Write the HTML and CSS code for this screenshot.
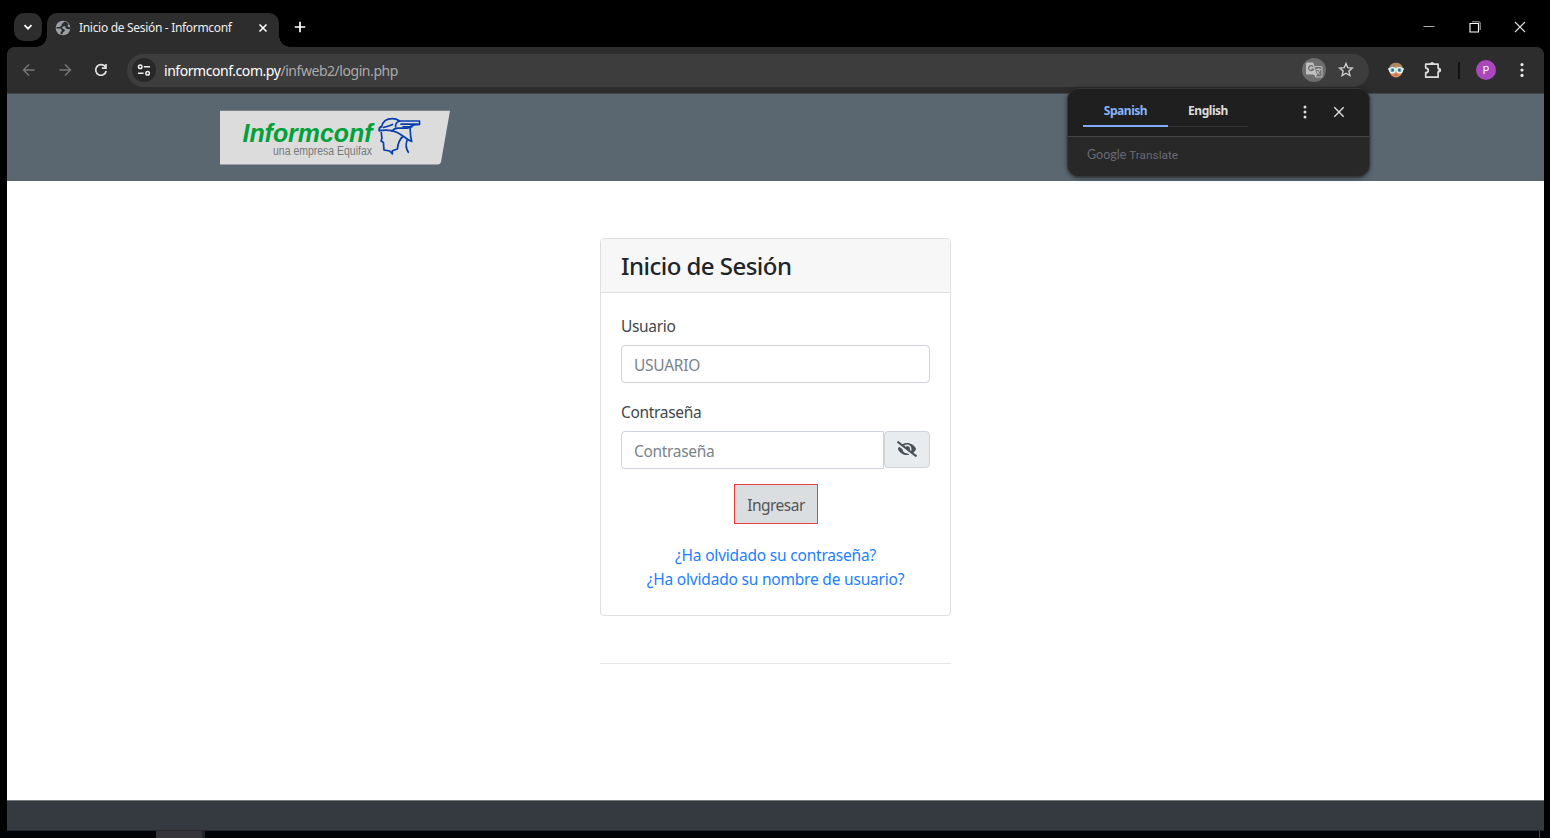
FILE: index.html
```html
<!DOCTYPE html>
<html lang="es">
<head>
<meta charset="utf-8">
<title>Inicio de Sesión - Informconf</title>
<link rel="stylesheet" href="styles.css">
</head>
<body>
<div class="desktop">
  <div class="tabstrip">
    <div class="tab-search"><svg width="12" height="12" viewBox="0 0 12 12"><path d="M2.5 4.2 6 7.7l3.5-3.5" fill="none" stroke="#fff" stroke-width="1.7"/></svg></div>
    <div class="tab">
      <svg class="favicon" width="16" height="16" viewBox="0 0 16 16"><circle cx="8" cy="8" r="7.3" fill="#9aa0a6"/><path d="M9.3 1.5 8 3.2 6.6 4v1.8L4.3 7H1.5v1.4h3.8l1.4 1.3-.1 1.6-1 1v1.6l1.5.5 1-2.2 1.8-1.2-.4-1.6-1.8-.8-.8-1.4 2-1h1.8l-.4 1.5 1.6 1.4 2.8.2.8-1.8-2.2-.4-.8-1.4 1-1.3-1.3-2z" fill="#2d2d2d"/></svg>
      <span class="tab-title">Inicio de Sesión - Informconf</span>
      <svg class="tab-close" width="10" height="10" viewBox="0 0 10 10"><path d="m1.5 1.5 7 7m0-7-7 7" stroke="#fff" stroke-width="1.6"/></svg>
    </div>
    <svg class="new-tab" width="12" height="12" viewBox="0 0 12 12"><path d="M6 .8v10.4M.8 6h10.4" stroke="#fff" stroke-width="1.7"/></svg>
    <div class="window-controls">
      <svg width="12" height="12" viewBox="0 0 12 12"><path d="M.5 5.5h11" stroke="#aaa"/></svg>
      <svg width="12" height="12" viewBox="0 0 12 12"><path d="M1 2.5h8.5V11H1z" fill="none" stroke="#fff" stroke-width="1.1"/><path d="M3 .8h7.2a1 1 0 0 1 1 1V9" fill="none" stroke="#aaa"/></svg>
      <svg width="12" height="12" viewBox="0 0 12 12"><path d="m1 1 10 10m0-10L1 11" stroke="#ddd" stroke-width="1.1"/></svg>
    </div>
  </div>

  <div class="window">
    <div class="toolbar">
      <div class="nav">
        <svg width="14" height="14" viewBox="0 0 14 14"><path d="M12.5 7h-11M7 1.5 1.5 7 7 12.5" fill="none" stroke="#777" stroke-width="1.4"/></svg>
        <svg width="14" height="14" viewBox="0 0 14 14"><path d="M1.5 7h11M7 1.5 12.5 7 7 12.5" fill="none" stroke="#777" stroke-width="1.4"/></svg>
        <svg width="14" height="14" viewBox="0 0 14 14"><path d="M11.5 4.1A5.3 5.3 0 1 0 12.2 8" fill="none" stroke="#e3e3e3" stroke-width="1.7"/><path d="M12.8 1v5H7.9V4.3h3.2V1z" fill="#e3e3e3"/></svg>
      </div>
      <div class="address">
        <div class="site-info"><svg width="14" height="12" viewBox="0 0 14 12"><g fill="none" stroke="#eee" stroke-width="1.5"><circle cx="3.2" cy="2.8" r="1.8"/><path d="M6.8 2.8H13M1 9.2h5.6"/><circle cx="10.6" cy="9.2" r="1.8"/></g></svg></div>
        <span class="url">informconf.com.py<span class="url-path">/infweb2/login.php</span></span>
        <div class="translate"><svg width="18" height="18" viewBox="0 0 18 18"><path d="M8 5.5h8a1 1 0 0 1 1 1V15a1 1 0 0 1-1 1h-5.2z" fill="#707070" stroke="#bbb" stroke-width="1.1"/><path d="M2 1.5h6.3l3.4 12H2a1 1 0 0 1-1-1v-10a1 1 0 0 1 1-1z" fill="#c0c0c0"/><path d="M8.2 5.8A2.5 2.5 0 1 0 8.5 8H6.2" fill="none" stroke="#686868" stroke-width="1.2"/><path d="M10.8 8.4H16M13.3 7.2v1.2m1.7 0c-.4 1.8-1.5 3.1-3.4 4.3m.2-2.8c.8 1.5 1.7 2.4 3 3.1M8.7 13.5h3l-1.5 2" fill="none" stroke="#c8c8c8"/></svg></div>
        <svg class="star" width="16" height="16" viewBox="0 0 16 16"><path d="m8 1.5 1.75 4.2 4.55.4-3.45 3 1.05 4.45L8 11.2l-3.9 2.35L5.15 9.1 1.7 6.1l4.55-.4z" fill="none" stroke="#ccc" stroke-width="1.4"/></svg>
      </div>
      <svg class="face" width="16" height="16" viewBox="0 0 16 16"><path d="M1.2 8h13.6c0 4-3 7.4-6.8 7.4S1.200 12 1.200 8z" fill="#e38d67"/><path d="M.8 8C.8 3.500 4 .8 8 .8s7.200 2.700 7.200 7.200z" fill="#aa8960"/><path d="M4 6.500c2-1 4-2 5-3l3.500 3.500L8 9z" fill="#d99468"/><path d="M.2 6.300h15.600v2H.2z" fill="#dff3f4"/><circle cx="4.400" cy="8.200" r="2.700" fill="#6cabb9" stroke="#e9ffff" stroke-width="1.200"/><circle cx="11.600" cy="8.200" r="2.700" fill="#6cabb9" stroke="#e9ffff" stroke-width="1.200"/><circle cx="4.700" cy="8.100" r="1.100" fill="#345d6d"/><circle cx="11.300" cy="8.100" r="1.100" fill="#345d6d"/><path d="M6.500 13h3" stroke="#a95248"/></svg>
      <svg class="puzzle" width="18" height="18" viewBox="0 0 18 18"><path d="M1.700 3.200h12.400v4.100q2.200 0 2.200 1.800t-2.200 1.800v5.300H1.700v-4.500q2.600-.1 2.600-2.300T1.700 7.100z" fill="none" stroke="#ddd" stroke-width="1.700" stroke-linejoin="round"/><path d="M6 3a2.100 2.100 0 0 1 4.200 0zM14.300 7a2.100 2.100 0 0 1 0 4.200z" fill="#ddd"/></svg>
      <span class="divider"></span>
      <span class="avatar">P</span>
      <svg class="menu" width="4" height="16" viewBox="0 0 4 16" fill="#e8e8e8"><circle cx="2" cy="2.6" r="1.6"/><circle cx="2" cy="8" r="1.6"/><circle cx="2" cy="13.4" r="1.6"/></svg>
    </div>

    <header class="site-header">
      <svg class="logo" width="230" height="55" viewBox="0 0 230 55">
        <path d="M0 .7h230l-9 51.3q-.4 2.4-3 2.4H0z" fill="#dcdcdc"/>
        <text class="logo-name" x="22.500" y="31.500" textLength="130" lengthAdjust="spacingAndGlyphs">Informconf</text>
        <text class="logo-sub" x="53" y="45" textLength="99" lengthAdjust="spacingAndGlyphs">una empresa Equifax</text>
        <g fill="none" stroke="#073fae" stroke-width="1.7" stroke-linejoin="round" stroke-linecap="round">
          <path d="M159.200 20.500c-.3-2.300.8-3.400 2.500-3.800 1-5.200 4.600-8 10.600-8 3.500 0 5.700 1.200 7.500 2.300h19.700v3.500l-5.500.5-4 1.600-2.500 1.600h-9.500c-3.500 0-4.500 1-6 3"/>
          <path d="M159.200 20.700c7.500-1.200 12.500-.8 18 1.700 6 2.800 8.500 7 14.500 9l-1-4.600-.7-9.500M179.800 11c-3.500 1-4.500 3-4.200 6M181 14.200h17M183 16.800h9M163.500 17.500c3-.8 6-1.300 9-3"/>
          <path d="M161.300 22.500l.6 5.700-.8 2.800 2.300 1.500.6 7.500 5.700 1 2.700 2.800v-3.100l5-1.700c.5-5.500 2-9.500 5.300-12.500M187 30.500c-1.500 4-1 8 1.300 11.800"/>
        </g>
      </svg>
    </header>

    <main class="content">
      <section class="card">
        <div class="card-header"><h1>Inicio de Sesión</h1></div>
        <form class="card-body">
          <label class="label-user" for="user">Usuario</label>
          <input class="field field-user" id="user" placeholder="USUARIO">
          <label class="label-pass" for="pass">Contraseña</label>
          <div class="password-group">
            <input class="field field-pass" id="pass" type="password" placeholder="Contraseña">
            <span class="toggle"><svg width="20" height="16" viewBox="0 0 640 512" fill="#495057"><path d="M320 400c-75.85 0-137.25-58.71-142.9-133.11L72.2 185.82c-13.79 17.3-26.48 35.59-36.72 55.59a32.35 32.35 0 0 0 0 29.19C89.71 376.41 197.07 448 320 448c26.91 0 52.87-4 77.89-10.46L346 397.39a144.13 144.13 0 0 1-26 2.61zm313.82 58.1l-110.55-85.44a331.25 331.25 0 0 0 81.25-102.07 32.35 32.35 0 0 0 0-29.19C550.29 135.59 442.93 64 320 64a308.15 308.15 0 0 0-147.32 37.7L45.46 3.37A16 16 0 0 0 23 6.18L3.37 31.45A16 16 0 0 0 6.18 53.9l588.36 454.73a16 16 0 0 0 22.46-2.81l19.64-25.27a16 16 0 0 0-2.82-22.45zm-183.72-142l-39.3-30.38A94.75 94.75 0 0 0 416 256a94.76 94.76 0 0 0-121.31-92.21A47.65 47.65 0 0 1 304 192a46.64 46.64 0 0 1-1.54 10l-73.61-56.89A142.31 142.31 0 0 1 320 112a143.92 143.92 0 0 1 144 144c0 21.63-5.29 41.79-13.9 60.11z"/></svg></span>
          </div>
          <button class="submit" type="button">Ingresar</button>
          <nav class="links"><a href="#">¿Ha olvidado su contraseña?</a><a href="#">¿Ha olvidado su nombre de usuario?</a></nav>
        </form>
      </section>
      <hr class="rule">
    </main>
    <footer class="site-footer"></footer>
  </div>
  <div class="taskbar"><span class="task"></span><span class="show-desktop"></span></div>

  <aside class="popup">
    <div class="popup-top">
      <div class="languages"><span class="language active">Spanish</span><span class="language">English</span></div>
      <svg class="popup-menu" width="4" height="14" viewBox="0 0 4 14" fill="#ddd"><circle cx="2" cy="2" r="1.5"/><circle cx="2" cy="7" r="1.5"/><circle cx="2" cy="12" r="1.5"/></svg>
      <svg class="popup-close" width="12" height="12" viewBox="0 0 12 12"><path d="m1.3 1.3 9.400 9.400m0-9.400-9.400 9.400" stroke="#ddd" stroke-width="1.400"/></svg>
    </div>
    <div class="popup-bottom"><span class="google">Google</span><span>Translate</span></div>
  </aside>
</div>
</body>
</html>
```
FILE: styles.css
```css
* { box-sizing: border-box; }
body { margin: 0; background: #000; font-family: "Noto Sans", "Open Sans", sans-serif; }
svg { display: block; flex: none; }
.desktop { position: relative; display: flex; flex-direction: column; width: 1550px; height: 838px; overflow: hidden; }
.tabstrip { display: flex; height: 47px; padding: 13px 24px 0 14px; }
.tab-search { display: grid; place-items: center; width: 28px; height: 28px; border-radius: 10px; background: #2d2d2d; }
.tab { position: relative; display: flex; align-items: center; width: 232px; height: 34px; margin-left: 5px; padding: 0 11px 5px 8px; border-radius: 10px 10px 0 0; background: #2d2d2d; }
.tab::before, .tab::after { content: ""; position: absolute; bottom: 0; width: 11px; height: 11px; }
.tab::before { left: -11px; background: radial-gradient(circle at 0 0, transparent 10.5px, #2d2d2d 11px); }
.tab::after { right: -11px; background: radial-gradient(circle at 100% 0, transparent 10.5px, #2d2d2d 11px); }
.tab-title { margin-left: 8px; color: #eee; font-size: 12px; letter-spacing: -.31px; white-space: nowrap; }
.tab-close { margin-left: auto; }
.new-tab { margin: 8px 0 0 15px; }
.window-controls { display: flex; gap: 33.5px; margin: 8px 0 0 auto; }
.window { width: 1537px; height: 784px; margin-left: 7px; display: flex; flex-direction: column; border-radius: 8px 8px 0 0; overflow: hidden; background: linear-gradient(#2d2d2d 47px, #fff 47px); }
.toolbar { display: flex; align-items: center; flex: none; height: 47px; padding-left: 15px; border-bottom: 1px solid #424649; background: #2d2d2d; }
.nav { display: flex; gap: 22px; }
.address { display: flex; align-items: center; width: 1242px; height: 33px; margin-left: 19px; padding: 0 15px 0 5px; border-radius: 17px; background: #3d3d3d; }
.site-info { display: grid; place-items: center; width: 24px; height: 24px; border-radius: 50%; background: #282828; }
.url { margin-left: 8px; color: #fff; font-size: 14px; letter-spacing: -.45px; }
.url-path { color: #aaa; }
.translate { display: grid; place-items: center; width: 24px; height: 24px; margin-left: auto; margin-right: 12px; border-radius: 50%; background: #6d6d6d; }
.face { margin-left: 19px; }
.puzzle { margin-left: 20px; }
.divider { width: 2px; height: 17px; margin-left: 16px; background: #111; }
.avatar { display: grid; place-items: center; width: 20px; height: 20px; margin-left: 16px; border-radius: 50%; background: #ab47bc; color: #fff; font: 10px Roboto, sans-serif; }
.menu { margin-left: 24px; }
.site-header { flex: none; height: 87px; padding: 16px 0 0 213px; background: #5b6770; }
.logo-name { fill: #00a13a; font: italic bold 25.5px "Liberation Sans", sans-serif; }
.logo-sub { fill: #77797c; font: 12px "Liberation Sans", sans-serif; }
.content { flex: none; display: flex; flex-direction: column; align-items: center; height: 619px; padding-top: 57px; }
.card { width: 351px; height: 378px; border: 1px solid #dfdfdf; border-radius: 4px; overflow: hidden; }
.card-header { height: 54px; padding: 12px 20px; border-bottom: 1px solid #dfdfdf; background: #f7f7f7; }
h1 { margin: 0; color: #212529; font-size: 24px; line-height: 30px; font-weight: 500; letter-spacing: -.53px; white-space: nowrap; }
.card-body { display: flex; flex-direction: column; padding: 21px 20px 20px; color: #42474b; font-size: 15.5px; line-height: 24px; }
label { height: 24px; margin-bottom: 7px; align-self: flex-start; }
.field { width: 100%; height: 38px; padding: 2px 12px 0; border: 1px solid #ced4da; border-radius: 4px; outline: none; background: #fff; font: 15.5px "Noto Sans", "Open Sans", sans-serif; }
.field::placeholder { color: #7b838a; opacity: 1; }
.field-user { margin-bottom: 17px; letter-spacing: -.28px; }
.label-user, .label-pass { letter-spacing: -.33px; }
.password-group { display: flex; align-items: flex-start; }
.field-pass { flex: 1; min-width: 0; border-radius: 4px 0 0 4px; letter-spacing: -.33px; }
.toggle { display: grid; place-items: center; width: 46px; height: 37px; border: 1px solid #ced4da; border-radius: 4px; background: #e9ecef; }
.toggle svg { margin-bottom: 1px; }
.submit { width: 84px; height: 40px; margin: 15px 0 0 113px; padding: 2px 0 0; border: 1px solid #ef3e42; background: #dbdee1; color: #555; font: 15.5px "Noto Sans", "Open Sans", sans-serif; letter-spacing: -.5px; }
.links { display: flex; flex-direction: column; align-items: center; margin-top: 19px; white-space: nowrap; }
.links a { color: #217fff; text-decoration: none; letter-spacing: -.2px; }
.rule { width: 351px; height: 1px; margin: 47px 0 0; border: 0; background: #e8e8e8; }
.site-footer { flex: 1; border-top: 1px solid #747b7a; border-bottom: 1px solid #25292e; background: #343a40; }
.taskbar { display: flex; justify-content: space-between; height: 7px; padding: 0 10px 0 156px; background: #000307; }
.task { width: 49px; border-right: 3px solid #242529; background: #35353a; }
.show-desktop { width: 1px; background: #444; }
.popup { position: absolute; left: 1067px; top: 88px; width: 303px; height: 89px; overflow: hidden; border: 1px solid #363636; border-radius: 12px; background: #282828; box-shadow: 0 1px 4px #0008; }
.popup-top { display: flex; height: 48px; padding-left: 15px; border-bottom: 1px solid #444746; background: #1f1f1f; }
.languages { display: flex; align-self: flex-start; }
.language { width: 80px; height: 38px; padding-top: 13px; border-bottom: 1px solid #353535; color: #ddd; font-size: 12px; line-height: 18px; font-weight: 700; text-align: center; letter-spacing: -.45px; }
.language.active { width: 85px; border-bottom: 2px solid #7cacf8; color: #8ab4f8; }
.popup-menu { margin: 16px 0 0 55px; }
.popup-close { margin: 17px 0 0 26px; }
.popup-bottom { display: flex; align-items: center; gap: 3px; height: 35px; padding-left: 19px; color: #686b70; font: 11.8px Roboto, sans-serif; }
.google { font-family: Lato, sans-serif; font-size: 12.5px; }
```
